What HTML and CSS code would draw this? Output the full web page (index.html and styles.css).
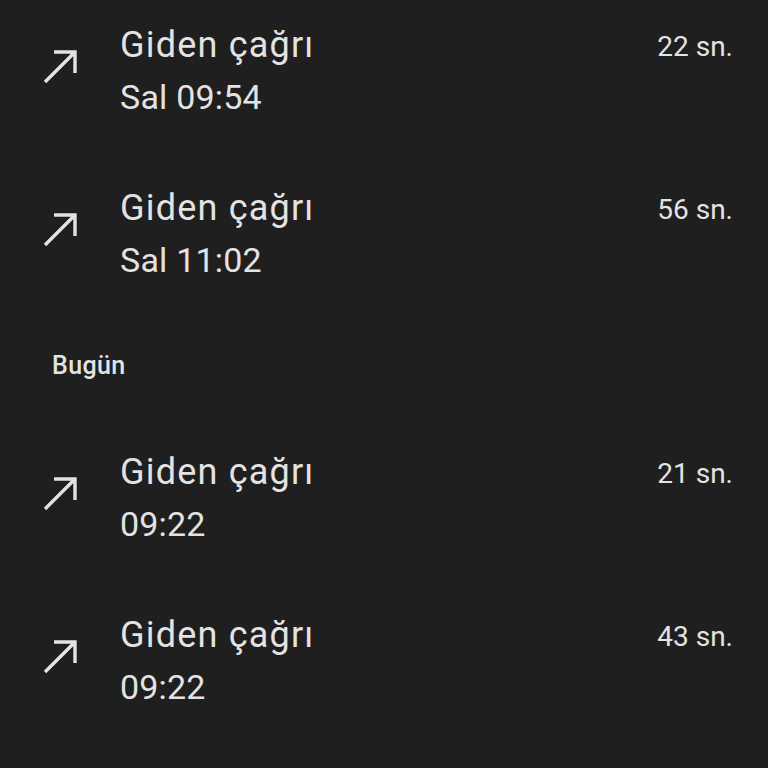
FILE: index.html
```html
<!DOCTYPE html>
<html lang="tr">
<head>
  <meta charset="UTF-8" />
  <title>Arama geçmişi</title>
  <link rel="stylesheet" href="styles.css">
</head>
<body>
  <main class="log">
    <div class="call">
      <svg class="call__icon" viewBox="0 0 40 40"><path d="M5 36 L35 6 M14 6 H35 V27"/></svg>
      <div class="call__text">
        <div class="call__title">Giden çağrı</div>
        <div class="call__time">Sal 09:54</div>
      </div>
      <div class="call__dur">22 sn.</div>
    </div>
    <div class="call">
      <svg class="call__icon" viewBox="0 0 40 40"><path d="M5 36 L35 6 M14 6 H35 V27"/></svg>
      <div class="call__text">
        <div class="call__title">Giden çağrı</div>
        <div class="call__time">Sal 11:02</div>
      </div>
      <div class="call__dur">56 sn.</div>
    </div>

    <h2 class="day">Bugün</h2>

    <div class="call">
      <svg class="call__icon" viewBox="0 0 40 40"><path d="M5 36 L35 6 M14 6 H35 V27"/></svg>
      <div class="call__text">
        <div class="call__title">Giden çağrı</div>
        <div class="call__time">09:22</div>
      </div>
      <div class="call__dur">21 sn.</div>
    </div>
    <div class="call">
      <svg class="call__icon" viewBox="0 0 40 40"><path d="M5 36 L35 6 M14 6 H35 V27"/></svg>
      <div class="call__text">
        <div class="call__title">Giden çağrı</div>
        <div class="call__time">09:22</div>
      </div>
      <div class="call__dur">43 sn.</div>
    </div>
  </main>
</body>
</html>
```
FILE: styles.css
```css
/* ===== base ===== */
*{box-sizing:border-box;}
html,body{margin:0;height:100%;}
body{
  background:#1f1f1f;color:#e3e3e3;
  font-family:'Roboto','Noto Sans',sans-serif;
  overflow:hidden;
}
.log{margin-top:-11px;}

/* ===== call row ===== */
.call{
  height:163px;display:flex;align-items:center;
  padding:0 35px 0 40px;
}
.call__icon{
  width:40px;height:40px;flex:none;margin-top:-9px;
  fill:none;stroke:#e3e3e3;stroke-width:3.4;stroke-linecap:butt;
}
.call__text{flex:1;margin-left:40px;}
.call__title{font-size:36px;line-height:52px;letter-spacing:1.2px;}
.call__time{font-size:34px;line-height:52px;letter-spacing:.2px;}
.call__dur{
  align-self:flex-start;margin-top:40px;
  font-size:28px;line-height:36px;
}

/* ===== day header ===== */
.day{
  margin:0;height:101px;display:flex;align-items:center;
  padding-left:52px;font-size:25px;font-weight:500;color:#e3e3e3;
  letter-spacing:.4px;
}
```
